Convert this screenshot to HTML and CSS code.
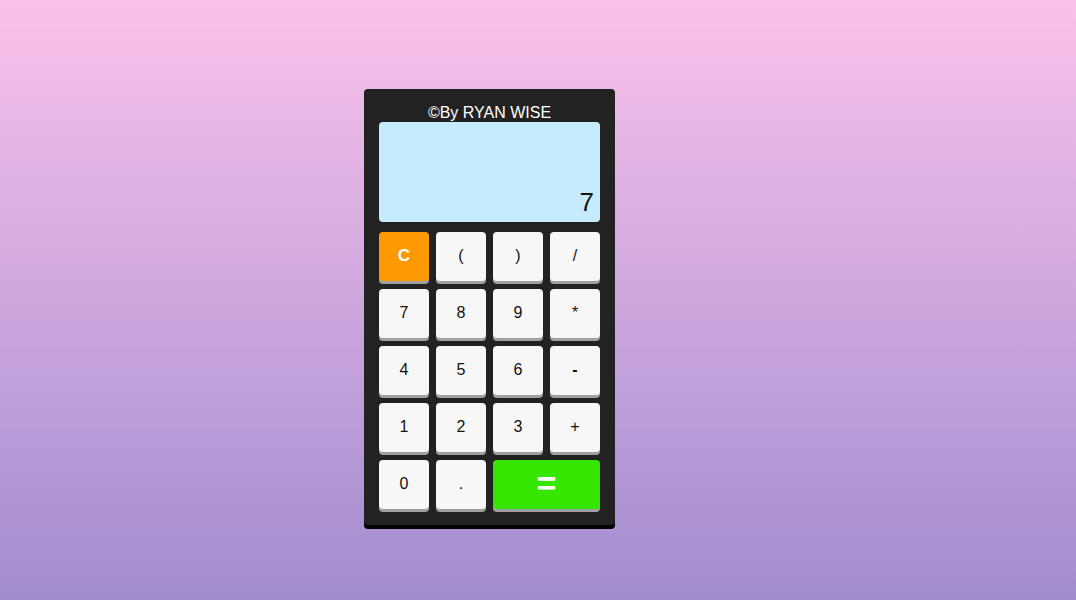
FILE: index.html
```html
<!DOCTYPE html>
<html>
<head>
<meta charset="utf-8">
<link rel="stylesheet" href="styles.css">
</head>
<body>
<div class="calc">
  <div class="credit">©By RYAN WISE</div>
  <div class="display"><span class="value">7</span></div>
  <div class="keys">
    <button class="key clear">C</button>
    <button class="key">(</button>
    <button class="key">)</button>
    <button class="key">/</button>
    <button class="key">7</button>
    <button class="key">8</button>
    <button class="key">9</button>
    <button class="key">*</button>
    <button class="key">4</button>
    <button class="key">5</button>
    <button class="key">6</button>
    <button class="key op">-</button>
    <button class="key">1</button>
    <button class="key">2</button>
    <button class="key">3</button>
    <button class="key">+</button>
    <button class="key">0</button>
    <button class="key">.</button>
    <button class="key equals">=</button>
  </div>
</div>
</body>
</html>
```
FILE: styles.css
```css
html, body {
  margin: 0;
  height: 100%;
}
body {
  background: linear-gradient(to bottom, #fbc2eb 0%, #a18cd1 100%);
  font-family: "Liberation Sans", Arial, sans-serif;
  padding: 89px 0 0 364px;
  box-sizing: border-box;
}
.calc {
  width: 251px;
  box-sizing: border-box;
  background: #222222;
  border-radius: 4px;
  padding: 15px 15px 15px;
  box-shadow: 0 4px 0 #000;
}
.credit {
  color: #fff;
  font-size: 16px;
  line-height: 18px;
  text-align: center;
}
.display {
  height: 100px;
  background: #c6ebfe;
  border-radius: 4px;
  display: flex;
  align-items: flex-end;
  justify-content: flex-end;
  padding: 0 6px 7px 0;
  box-sizing: border-box;
}
.value {
  font-size: 26px;
  line-height: 26px;
  color: #111;
}
.keys {
  margin-top: 10px;
  display: grid;
  grid-template-columns: repeat(4, 50px);
  grid-auto-rows: 50px;
  column-gap: 7px;
  row-gap: 7px;
}
.key {
  border: none;
  margin: 0;
  padding: 0 0 2px;
  border-radius: 4px;
  background: #f7f7f7;
  box-shadow: 0 3px 0 #a0a0a0;
  font-family: "Liberation Sans", Arial, sans-serif;
  font-size: 16px;
  color: #111;
  height: 49px;
}
.key.op {
  font-weight: bold;
}
.key.clear {
  background: #fd9a02;
  color: #fff;
  font-weight: bold;
  font-size: 17px;
}
.key.equals {
  grid-column: span 2;
  background: #35e600;
  color: #fff;
  font-weight: bold;
  font-size: 34px;
}
```
